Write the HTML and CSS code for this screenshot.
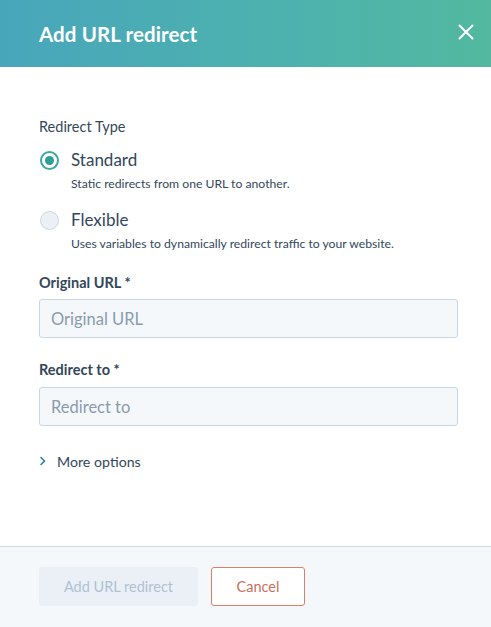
FILE: index.html
```html
<!DOCTYPE html>
<html>
<head>
<meta charset="utf-8">
<link rel="stylesheet" href="styles.css">
</head>
<body>
<div class="modal">
  <header class="header">
    <h1 class="title">Add URL redirect</h1>
    <button class="close" aria-label="Close">
      <svg width="16" height="16" viewBox="0 0 16 16"><path d="M1.5 1.5 L14.5 14.5 M14.5 1.5 L1.5 14.5" stroke="#fff" stroke-width="2" stroke-linecap="round"/></svg>
    </button>
  </header>
  <main class="body">
    <div class="group-label">Redirect Type</div>
    <div class="radio-opt">
      <div class="radio-row"><span class="radio checked"></span><span class="radio-text">Standard</span></div>
      <div class="radio-desc">Static redirects from one URL to another.</div>
    </div>
    <div class="radio-opt">
      <div class="radio-row"><span class="radio"></span><span class="radio-text">Flexible</span></div>
      <div class="radio-desc">Uses variables to dynamically redirect traffic to your website.</div>
    </div>
    <div class="field">
      <label class="field-label">Original URL *</label>
      <div class="input">Original URL</div>
    </div>
    <div class="field">
      <label class="field-label">Redirect to *</label>
      <div class="input">Redirect to</div>
    </div>
    <div class="more">
      <svg class="chev" width="8" height="10" viewBox="0 0 8 10"><path d="M2 1.5 L5.5 5 L2 8.5" fill="none" stroke="#2d7e96" stroke-width="1.6" stroke-linecap="round" stroke-linejoin="round"/></svg>
      <span>More options</span>
    </div>
  </main>
  <footer class="footer">
    <button class="btn btn-primary">Add URL redirect</button>
    <button class="btn btn-secondary">Cancel</button>
  </footer>
</div>
</body>
</html>
```

FILE: styles.css
```css
* { box-sizing: border-box; }
html, body { margin: 0; padding: 0; background: #fff; }
body {
  font-family: Lato, "Noto Sans", sans-serif;
  color: #33475b;
  width: 491px;
  height: 627px;
  overflow: hidden;
}
.modal { display: flex; flex-direction: column; height: 627px; }
.header {
  height: 67px;
  flex: none;
  background: linear-gradient(90deg, #48a6bb 0%, #4db2ad 60%, #53b89f 100%);
  display: flex;
  align-items: center;
  justify-content: space-between;
  padding: 0 17px 0 39px;
}
.title {
  margin: 0;
  color: #fff;
  font-size: 20.5px;
  font-weight: 700;
  letter-spacing: 0.1px;
}
.close {
  background: none; border: 0; padding: 0; width: 16px; height: 16px;
  display: flex; margin-bottom: 3px;
}
.body { flex: 1; padding: 52px 33px 0 39px; }
.group-label { font-size: 14.5px; line-height: 16px; margin-bottom: 14px; }
.radio-opt { margin-bottom: 17px; }
.radio-row { display: flex; align-items: center; height: 22px; }
.radio {
  width: 19px; height: 19px; border-radius: 50%;
  border: 1px solid #cbd6e2; background: #eaf0f6;
  margin: 0 12px 0 1px;
  flex: none;
}
.radio.checked {
  border: 2px solid #40a7a3;
  background: #fff;
  display: flex; align-items: center; justify-content: center;
}
.radio.checked::after {
  content: ""; width: 9px; height: 9px; border-radius: 50%; background: #2f9d9a;
}
.radio-text { font-size: 17px; line-height: 22px; }
.radio-desc { font-size: 12.2px; margin: 5px 0 0 32px; line-height: 16px; }
.field { margin-bottom: 24px; }
.radio-opt + .field { margin-top: 23px; }
.field-label { display: block; font-size: 14.5px; font-weight: 700; line-height: 16px; margin-bottom: 8px; }
.field + .field .field-label { margin-bottom: 9px; }
.input {
  height: 39px;
  border: 1px solid #cbd6e2;
  border-radius: 3px;
  background: #f5f8fa;
  color: #8a9bae;
  font-size: 16.5px;
  padding: 0 11px;
  display: flex; align-items: center;
}
.more { display: flex; align-items: center; margin-top: 27px; font-size: 14.2px; height: 16px; }
.chev { margin: 0 10px 0 0; }
.footer {
  height: 81px;
  flex: none;
  border-top: 1px solid #cbd6e2;
  background: #f5f8fa;
  display: flex;
  align-items: center;
  padding: 0 0 2px 39px;
  gap: 13px;
}
.btn {
  height: 39px;
  border-radius: 3px;
  font-family: inherit;
  font-size: 14.5px;
  padding: 0;
}
.btn-primary {
  width: 159px;
  background: #eaf0f6;
  border: 1px solid #eaf0f6;
  color: #b0c1d4;
}
.btn-secondary {
  width: 94px;
  background: #fff;
  border: 1px solid #d9806c;
  color: #c8705c;
}
```
